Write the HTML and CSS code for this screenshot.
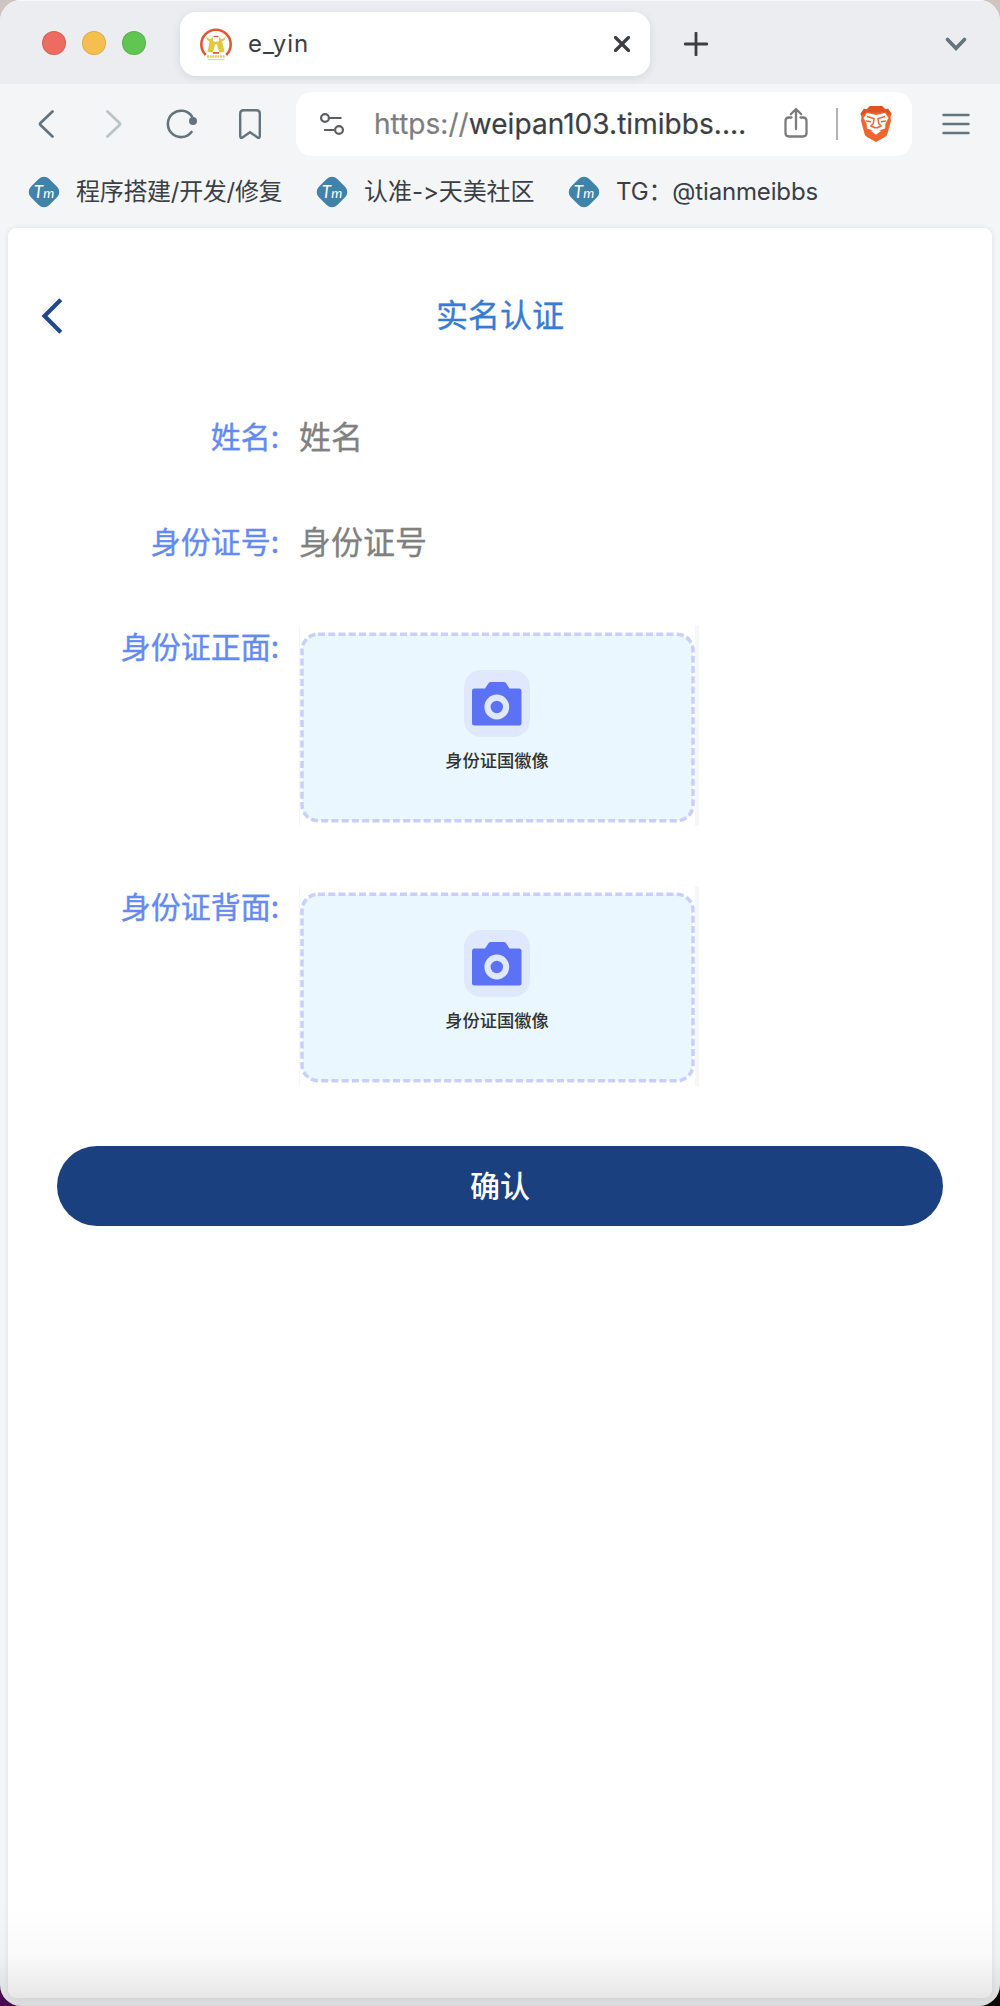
FILE: index.html
```html
<!DOCTYPE html>
<html lang="zh-CN">
<head>
<meta charset="utf-8">
<title>e_yin</title>
<link rel="stylesheet" href="styles.css">
</head>
<body>
<svg width="0" height="0" class="defs" aria-hidden="true">
  <symbol id="camera" viewBox="0 0 66 67">
    <rect width="66" height="67" rx="17" fill="#e0e8fe"/>
    <path d="M10 18.500h11l3.500-5.200q.8-1.300 2.300-1.300h13q1.500 0 2.300 1.300l3.400 5.200H55q2.500 0 2.500 2.500v32q0 2.500-2.500 2.500H10.500Q8 55.500 8 53V21q0-2.500 2-2.500z" fill="#5b72f5"/>
    <circle cx="32.800" cy="37" r="9.300" fill="none" stroke="#e0e8fe" stroke-width="6.200"/>
  </symbol>
</svg>
<div class="window">
  <header class="tabs">
    <div class="lights"><i class="red"></i><i class="yellow"></i><i class="green"></i></div>
    <div class="tab">
      <svg width="32" height="32" viewBox="0 0 32 32">
        <path d="M5.800 27A14.700 14.700 0 1 1 26.200 27" fill="none" stroke="#dd5a35" stroke-width="2.600"/>
        <path d="M12.500 9q3.500-2.500 7 0z" fill="#dd5a35"/>
        <path d="M6.500 8q1 3 4.500 3l2-2v4l3 1 3-1V9l2 2q3.500 0 4.500-3 .5 4-3.500 5.500L23 17l1.500 7-5 .5-1.500-4-1-4h-2l-1 4-1.500 4-5-.5L9 17l.5-3.500Q6 12 6.500 8z" fill="#e3c83f"/>
        <path d="M13 24h6v1.700h-6z" fill="#dd5a35"/>
        <path d="M7 28.500h18" stroke="#e0cc5a" stroke-width="2.600" stroke-dasharray="2 .6"/>
        <path d="M7.500 31.500h17" stroke="#eadb91"/>
      </svg>
      <span class="tab-title">e_yin</span>
      <svg width="16" height="16" viewBox="0 0 16 16"><path d="M1.500 1.500l13 13M14.500 1.500l-13 13" stroke="#3b3e43" stroke-width="3.200" stroke-linecap="round"/></svg>
    </div>
    <svg class="plus" width="24" height="24" viewBox="0 0 24 24"><path d="M12 1v22M1 12h22" stroke="#3b3e43" stroke-width="2.800" stroke-linecap="round"/></svg>
    <svg class="chevron" width="22" height="16" viewBox="0 0 22 16"><path d="M2.500 3.500L11 12.300l8.500-8.800" fill="none" stroke="#64747e" stroke-width="3.600" stroke-linecap="round"/></svg>
  </header>
  <div class="toolbar">
    <div class="nav">
      <svg width="16" height="28" viewBox="0 0 16 28"><path d="M14.500 1.500L2.500 13q-1 1 0 2l12 11.500" fill="none" stroke="#64747e" stroke-width="2.700" stroke-linecap="round"/></svg>
      <svg width="16" height="28" viewBox="0 0 16 28"><path d="M1.500 1.500L13.500 13q1 1 0 2l-12 11.500" fill="none" stroke="#bac3c7" stroke-width="2.700" stroke-linecap="round"/></svg>
      <svg width="32" height="30" viewBox="0 0 32 30"><path d="M26 7.500A13.200 13.200 0 1 0 25.500 23" fill="none" stroke="#64747e" stroke-width="2.600" stroke-linecap="round"/><circle cx="27" cy="12" r="4" fill="#64747e"/></svg>
      <svg width="22" height="31" viewBox="0 0 22 31"><path d="M4.500 1.200h13q3.300 0 3.300 3.300V27q0 3-2.600 1.200L11 23.300l-7.200 4.900Q1.200 30 1.200 27V4.500q0-3.300 3.300-3.300z" fill="none" stroke="#64747e" stroke-width="2.400"/></svg>
    </div>
    <div class="address">
      <svg width="26" height="24" viewBox="0 0 26 24" fill="none" stroke="#5b5e62" stroke-width="2.200"><circle cx="5" cy="6" r="3.900"/><path d="M9 6h12.500M4 18h10"/><circle cx="19" cy="18" r="3.900"/></svg>
      <span class="url"><span class="scheme">https://</span>weipan103.timibbs.…</span>
      <svg class="share" width="24" height="32" viewBox="0 0 24 32" fill="none" stroke="#7c7c7e" stroke-width="2.300" stroke-linecap="round" stroke-linejoin="round"><path d="M7.500 10.500H5Q1.500 10.500 1.500 14v12q0 3.500 3.500 3.500h14q3.500 0 3.500-3.500V14q0-3.500-3.500-3.500h-2.500M12 22V2.200M6.800 7.200L12 2l5.200 5.200"/></svg>
      <span class="divider"></span>
      <svg width="32" height="36" viewBox="0 0 32 36">
        <path d="M10 0h12l3 3.300 3-.5 3.500 5-1 3 .5 4-3.500 13q-.5 2-2.500 3.300L16 36l-9-4.900q-2-1.300-2.500-3.300L1 14.800l.5-4-1-3 3.500-5 3 .5z" fill="#ef6530"/>
        <path d="M10 0h12l3 3.300 3-.5 3.500 5-1 2-5-4-9.500 1-9.500-1-5 4-1-2 3.500-5 3 .5z" fill="#de5324"/>
        <path d="M7 7l9 2 9-2 3.500 5-3 5.500-.5 5-7 2.200-2-2-2 2-7-2.200-.5-5L3.500 12z" fill="#fff"/>
        <path d="M7 10.500l7 2-.7 5L11 20l5 2.300 5-2.300-2.300-2.500-.7-5 7-2M6 15l5 .7M26 15l-5 .7" fill="none" stroke="#ef6530" stroke-width="1.500"/>
        <path d="M16 22l-1.300 3h2.600z" fill="#ef6530"/>
        <path d="M11 25l5-2.700 5 2.700-5 3.800z" fill="#fff"/>
      </svg>
    </div>
    <svg class="menu" width="28" height="22" viewBox="0 0 28 22"><path d="M1.500 2h25M1.500 11h25M1.500 20h25" stroke="#64747e" stroke-width="2.400" stroke-linecap="round"/></svg>
  </div>
  <nav class="bookmarks">
    <a class="bookmark first"><span class="logo"><b><i>T</i>m</b></span><span>程序搭建/开发/修复</span></a>
    <a class="bookmark second"><span class="logo"><b><i>T</i>m</b></span><span>认准-&gt;天美社区</span></a>
    <a class="bookmark third"><span class="logo"><b><i>T</i>m</b></span><span>TG：@tianmeibbs</span></a>
  </nav>
  <main class="page">
    <div class="titlebar">
      <svg width="22" height="36" viewBox="0 0 22 36"><path d="M19.800 1.800L3.500 18l16.300 16.200" fill="none" stroke="#20488a" stroke-width="4.200"/></svg>
      <h1>实名认证</h1>
    </div>
    <form class="form">
      <div class="row"><label>姓名:</label><input type="text" placeholder="姓名"></div>
      <div class="row"><label>身份证号:</label><input type="text" placeholder="身份证号"></div>
      <div class="row photo"><label>身份证正面:</label>
        <div class="upload">
          <svg class="frame" width="396" height="192"><rect x="2" y="2.200" width="391" height="186.500" rx="16"/></svg>
          <svg width="66" height="67"><use href="#camera"/></svg><span>身份证国徽像</span>
        </div>
      </div>
      <div class="row photo"><label>身份证背面:</label>
        <div class="upload">
          <svg class="frame" width="396" height="192"><rect x="2" y="2.200" width="391" height="186.500" rx="16"/></svg>
          <svg width="66" height="67"><use href="#camera"/></svg><span>身份证国徽像</span>
        </div>
      </div>
      <button type="button" class="confirm">确认</button>
    </form>
  </main>
  <div class="shade"></div>
</div>
</body>
</html>
```
FILE: styles.css
```css
* { box-sizing: border-box; }
body {
  margin: 0;
  background: linear-gradient(#cfc5c0, #cfc5c0) top / 100% 50% no-repeat, linear-gradient(90deg, #4a0a50 0 50%, #0c0a08 50%);
  font-family: Inter, "Noto Sans CJK SC", sans-serif;
  color: #3b3e43;
}
svg { display: block; flex: none; }
.defs { position: absolute; }
.window {
  position: relative;
  display: flex;
  flex-direction: column;
  height: 2006px;
  overflow: hidden;
  border-radius: 21px;
  background: #f3f5f7;
}
.tabs {
  display: flex;
  align-items: center;
  height: 84px;
  padding: 3px 33px 0 42px;
  border-top: 1px solid #f8f8fa;
  background: #ecedf1;
}
.lights { display: flex; gap: 16px; width: 138px; margin-top: -3px; }
.lights i { width: 24px; height: 24px; border-radius: 50%; border: 1px solid rgba(0, 0, 0, .1); }
.red { background: #ed6b60; }
.yellow { background: #f5bf4f; }
.green { background: #61c554; }
.tab {
  display: flex;
  align-items: center;
  width: 470px;
  height: 64px;
  padding: 0 20px;
  border-radius: 16px;
  background: #fff;
  box-shadow: 0 2px 8px rgba(60, 65, 80, .12);
}
.tab-title { flex: 1; margin: 0 0 0 16px; font-size: 24px; line-height: 32px; letter-spacing: .9px; }
.plus { margin-left: 34px; }
.chevron { margin-left: auto; }
.toolbar { display: flex; align-items: center; height: 80px; padding-left: 38px; }
.nav { display: flex; align-items: center; width: 258px; }
.nav svg:nth-child(2) { margin-left: 52px; }
.nav svg:nth-child(3) { margin-left: 44px; }
.nav svg:nth-child(4) { margin-left: 41px; }
.address {
  display: flex;
  align-items: center;
  width: 616px;
  height: 64px;
  padding-left: 24px;
  border-radius: 16px;
  background: #fff;
}
.url { width: 409px; padding-left: 28px; font-size: 28px; letter-spacing: .05px; white-space: nowrap; -webkit-text-stroke: .2px; }
.scheme { color: #7d7d7f; }
.share { margin: -2px 0 0 29px; }
.divider { width: 2px; height: 32px; margin: 0 22px 0 28px; background: #b4b4b6; }
.menu { margin-left: 30px; }
.bookmarks { display: flex; align-items: center; height: 64px; padding: 0 0 8px 28px; font-size: 24px; line-height: 32px; white-space: nowrap; font-feature-settings: "calt" 0; }
.bookmark { display: flex; align-items: center; gap: 16px; }
.first { width: 288px; letter-spacing: -.3px; }
.second { width: 252px; letter-spacing: -.05px; }
.third { letter-spacing: -.15px; }
.logo { display: grid; place-items: center; width: 32px; height: 32px; letter-spacing: 0; }
.logo::before { content: ""; grid-area: 1 / 1; width: 26px; height: 26px; border-radius: 7.5px; background: #4083aa; transform: rotate(45deg); }
.logo b { grid-area: 1 / 1; z-index: 1; color: #fff; font: italic 14px/20px Lato, sans-serif; }
.logo b i { font-size: 17px; }
.page { width: 984px; height: 1770px; margin: 0 8px; border-radius: 8px; background: #fff; box-shadow: 0 0 5px rgba(50, 60, 65, .1); }
.titlebar { display: grid; grid-template-columns: 68px 1fr 68px; align-items: center; height: 176px; padding: 0 33px; }
.titlebar h1 { margin: -7px 0 0; text-align: center; color: #377bd2; font-size: 32px; font-weight: 400; -webkit-text-stroke: .3px; }
.form { display: flex; flex-direction: column; }
.row { display: flex; height: 105px; padding-top: 7px; }
.row label { width: 271px; text-align: right; color: #648af2; font-size: 30px; line-height: 48px; font-family: "Noto Sans CJK SC", sans-serif; -webkit-text-stroke: .4px; }
.row input { width: 500px; height: 48px; margin-left: 18px; padding: 0 0 0 2px; border: 0; background: transparent; font: 32px "Noto Sans CJK SC", sans-serif; -webkit-text-stroke: .3px; }
.row input::placeholder { color: #808080; opacity: 1; }
.photo { height: 260px; }
.upload {
  display: flex;
  flex-direction: column;
  align-items: center;
  position: relative;
  width: 400px;
  height: 200px;
  margin: 5px 0 0 20px;
  padding: 44px 1px 0 0;
  border-left: 1px solid #f5f6f7;
  border-right: 4px solid #f6f7f8;
}
.upload > svg { position: relative; }
.upload > .frame { position: absolute; left: 0; top: 6px; }
.frame rect { fill: #ebf7ff; stroke: #c9cffd; stroke-width: 3.5; stroke-dasharray: 7 3.25; }
.upload span { position: relative; margin-top: 10px; color: #333; font: 500 17.3px/26px "Noto Sans CJK SC", sans-serif; }
.confirm { width: 886px; height: 80px; margin: 12px 0 0 49px; padding: 0 0 5px; border: 0; border-radius: 40px; background: #1a4080; color: #fff; font: 500 30px "Noto Sans CJK SC", sans-serif; }
.shade { position: absolute; inset: auto 0 0; height: 100px; background: linear-gradient(rgba(0,0,0,0), rgba(0,0,0,.02) 50%, rgba(0,0,0,.11)); }
```
